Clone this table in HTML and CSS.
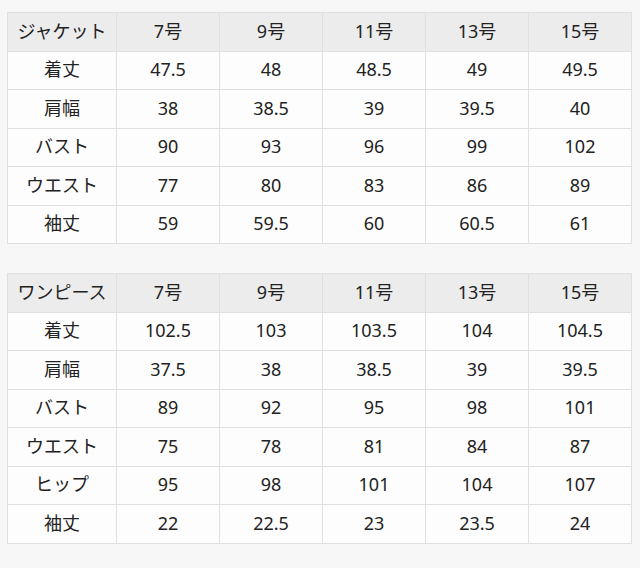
FILE: index.html
```html
<!DOCTYPE html>
<html lang="ja">
<head>
<meta charset="utf-8">
<link rel="stylesheet" href="styles.css">
</head>
<body>
<div class="page">
<table class="size">
<tr class="head"><th>ジャケット</th><th>7号</th><th>9号</th><th>11号</th><th>13号</th><th>15号</th></tr>
<tr><td>着丈</td><td>47.5</td><td>48</td><td>48.5</td><td>49</td><td>49.5</td></tr>
<tr><td>肩幅</td><td>38</td><td>38.5</td><td>39</td><td>39.5</td><td>40</td></tr>
<tr><td>バスト</td><td>90</td><td>93</td><td>96</td><td>99</td><td>102</td></tr>
<tr><td>ウエスト</td><td>77</td><td>80</td><td>83</td><td>86</td><td>89</td></tr>
<tr><td>袖丈</td><td>59</td><td>59.5</td><td>60</td><td>60.5</td><td>61</td></tr>
</table>
<table class="size">
<tr class="head"><th>ワンピース</th><th>7号</th><th>9号</th><th>11号</th><th>13号</th><th>15号</th></tr>
<tr><td>着丈</td><td>102.5</td><td>103</td><td>103.5</td><td>104</td><td>104.5</td></tr>
<tr><td>肩幅</td><td>37.5</td><td>38</td><td>38.5</td><td>39</td><td>39.5</td></tr>
<tr><td>バスト</td><td>89</td><td>92</td><td>95</td><td>98</td><td>101</td></tr>
<tr><td>ウエスト</td><td>75</td><td>78</td><td>81</td><td>84</td><td>87</td></tr>
<tr><td>ヒップ</td><td>95</td><td>98</td><td>101</td><td>104</td><td>107</td></tr>
<tr><td>袖丈</td><td>22</td><td>22.5</td><td>23</td><td>23.5</td><td>24</td></tr>
</table>
</div>
</body>
</html>
```
FILE: styles.css
```css
html, body {
  margin: 0;
  padding: 0;
  background: #f7f7f7;
}
.page {
  padding: 12px 0 0 7px;
  display: flex;
  flex-direction: column;
  gap: 29px;
  font-family: "Noto Sans", "Noto Sans CJK JP", sans-serif;
  color: #222;
}
.size {
  border-collapse: collapse;
  table-layout: fixed;
  width: 625px;
  font-size: 18px;
}
.size th, .size td {
  border: 1px solid #e0e0e0;
  height: 35px;
  padding: 0 0 2.5px 0;
  text-align: center;
  vertical-align: middle;
  font-weight: normal;
  background: #fdfdfd;
  line-height: 1;
}
.size th:first-child, .size td:first-child {
  width: 108px;
}
.size .head th {
  background: #ececec;
}
```
